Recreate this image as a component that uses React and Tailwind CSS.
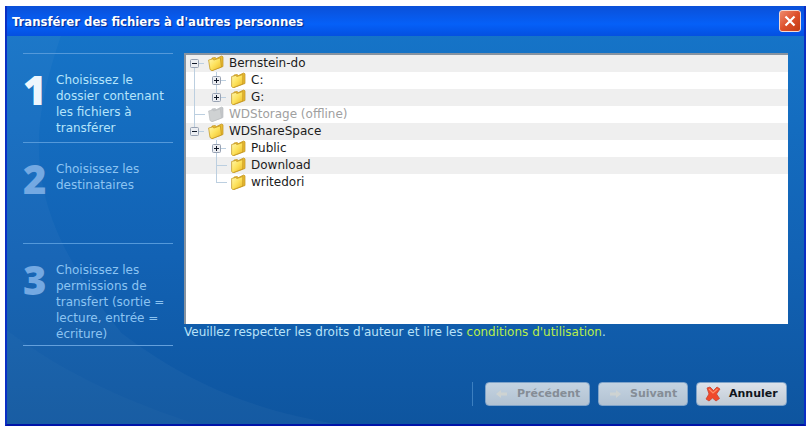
import React from "react";

const steps = [
  {
    number: "1",
    text: "Choisissez le dossier contenant les fichiers à transférer",
    size: "min-h-[89px]",
    numberColor: "text-[#eef6fd]",
    textColor: "text-[#b5e4fb]",
  },
  {
    number: "2",
    text: "Choisissez les destinataires",
    size: "min-h-[101px]",
    numberColor: "text-[#74a9e2]",
    textColor: "text-[#8cc4f2]",
  },
  {
    number: "3",
    text: "Choisissez les permissions de transfert (sortie = lecture, entrée = écriture)",
    size: "min-h-[102px]",
    numberColor: "text-[#74a9e2]",
    textColor: "text-[#8cc4f2]",
  },
];

const rows = [
  { label: "Bernstein-do", guides: [{ toggle: "minus", down: true }] },
  { label: "C:", guides: [{ up: true, down: true }, { toggle: "plus", up: true, down: true }] },
  { label: "G:", guides: [{ up: true, down: true }, { toggle: "plus", up: true }] },
  { label: "WDStorage (offline)", offline: true, guides: [{ up: true, down: true, across: true }] },
  { label: "WDShareSpace", guides: [{ toggle: "minus", up: true }] },
  { label: "Public", guides: [{}, { toggle: "plus", up: true, down: true }] },
  { label: "Download", guides: [{}, { up: true, down: true, across: true }] },
  { label: "writedori", guides: [{}, { up: true, across: true }] },
];

function Guide({ up, down, across, toggle, label }) {
  const drawing = (
    <svg width="22" height="17" viewBox="0 0 22 17" className="block" aria-hidden="true">
      <g stroke="#bccfe0" shapeRendering="crispEdges">
        {up && <path d="M8.5 0V9" />}
        {down && <path d="M8.5 8V17" />}
        {across && <path d="M8 8.5H19" />}
        {toggle && <path d="M13 8.5H18" />}
      </g>
      {toggle && (
        <>
          <rect x="4.500" y="4.500" width="8" height="8" rx="1" fill="#eceef2" stroke="#98a2b3" />
          <path d="M6 8.500H11" stroke="#101828" />
          {toggle === "plus" && <path d="M8.500 6V11" stroke="#101828" />}
        </>
      )}
    </svg>
  );
  if (!toggle) return drawing;
  return (
    <button type="button" aria-label={label} aria-expanded={toggle === "minus"}>
      {drawing}
    </button>
  );
}

function Folder({ offline, open }) {
  const edge = offline ? "#bcbfc2" : "#c0921c";
  const back = offline ? "#c4c7c9" : "#e9bb33";
  return (
    <svg width="16" height="17" viewBox="0 0 16 17" className="block shrink-0" aria-hidden="true">
      <defs>
        <linearGradient id="folderFront" x1="0" y1="0" x2="1" y2="1">
          <stop offset="0" stopColor="#fff8b0" />
          <stop offset="0.5" stopColor="#fde25c" />
          <stop offset="1" stopColor="#eab524" />
        </linearGradient>
      </defs>
      <path d="M4 3L7 2.500L8.500 3.500L13.500 1L15 1.800V11.500L4 15.500L2.500 14Z" fill={back} stroke={edge} strokeWidth="0.7" />
      <path
        d={open ? "M0.600 5L4.500 4L6 5L12.300 2.800L13.500 12L4 15.700L2 14.500Z" : "M1.600 4.500L5.500 3.500L7 4.500L12.800 2.500V12L3 15.700L1.600 14.500Z"}
        fill={offline ? "#cfd2d3" : "url(#folderFront)"}
        stroke={edge}
        strokeWidth="0.7"
      />
    </svg>
  );
}

function Arrow({ back }) {
  return (
    <svg width="14" height="12" viewBox="0 0 14 12" className="block" aria-hidden="true">
      <path
        d={back ? "M1 6L6 2V4.500H12V7.500H6V10Z" : "M13 6L8 2V4.500H2V7.500H8V10Z"}
        fill="#ced3d2"
      />
    </svg>
  );
}

function Cross() {
  return (
    <svg width="16" height="16" viewBox="0 0 16 16" className="block" aria-hidden="true">
      <path
        d="M2 2L5 1L8.500 4.500L12 1L15 3L11.500 8L14.500 12.500L11 15L7.500 12L4 15L1 13L4 8Z"
        fill="#f0492c"
        stroke="#c9432e"
        strokeWidth="0.8"
        strokeLinejoin="round"
      />
      <path d="M4 3L8 7L12.500 3" fill="none" stroke="#ff8d68" strokeWidth="1.200" />
    </svg>
  );
}

const buttonBase =
  "flex h-6 items-center gap-2 rounded border border-[#7fa3c9] font-bold text-[11px] leading-4";
const disabledButton = "bg-linear-to-b from-[#c4d3e1] to-[#b2c2d2] pl-[9px] text-[#858d96]";

export default function App() {
  return (
    <div className="bg-white pt-[6px] pr-[6px] pb-[2px] pl-[5px] font-['DejaVu_Sans',Verdana,sans-serif] text-[12px]">
      <main className="relative isolate flex flex-col overflow-hidden border-x-2 border-b-2 border-[#0a2fc4] border-b-[#0014a8] bg-linear-to-b from-[#1676ca] via-[#1262b4] via-60% to-[#0e559f]">
        <svg
          className="absolute inset-0 -z-10 h-full w-full"
          viewBox="0 0 798 419"
          preserveAspectRatio="none"
          aria-hidden="true"
        >
          <path d="M54 30C20 130 15 205 115 328C200 392 270 408 330 419H0V30Z" fill="#fff" fillOpacity="0.030" />
          <path d="M0 325C60 370 125 398 190 419H0Z" fill="#fff" fillOpacity="0.020" />
        </svg>

        <header className="-mx-[2px] flex h-[30px] items-center justify-between bg-linear-to-b from-[#0a50d8] via-[#0560f8] via-60% to-[#0450e0] pr-[5px] pl-[7px]">
          <h1 className="font-['DejaVu_Sans_Condensed','DejaVu_Sans',sans-serif] pt-[2px] text-[13px] leading-5 font-bold text-white [text-shadow:1px_1px_1px_#06288c]">
            Transférer des fichiers à d'autres personnes
          </h1>
          <button
            type="button"
            aria-label="Fermer"
            className="grid size-[22px] place-items-center rounded-[3px] border border-[#f3d9d3] bg-linear-to-br from-[#ee8a6c] via-[#dd4f2b] to-[#c23c14]"
          >
            <svg width="14" height="14" viewBox="0 0 14 14" aria-hidden="true">
              <path d="M2.500 2.500L11.500 11.500M11.500 2.500L2.500 11.500" stroke="#fff" strokeWidth="2.200" />
            </svg>
          </button>
        </header>

        <div className="flex gap-[11px] px-4 pt-[17px]">
          <ol className="w-[150px] shrink-0 border-b border-[#64a0dc]">
            {steps.map((step) => (
              <li
                key={step.number}
                className={`flex border-t border-[#5499da] pt-[18px] ${step.size}`}
              >
                <span className={`w-[33px] shrink-0 pt-[2px] font-['Open_Sans',sans-serif] text-[40px] leading-8 font-extrabold ${step.numberColor}`}>
                  {step.number}
                </span>
                <span className={`leading-4 ${step.textColor}`}>{step.text}</span>
              </li>
            ))}
          </ol>

          <section className="min-w-0 flex-1">
            <ul className="h-[271px] border-t-2 border-l-2 border-[#8793a0] bg-white">
              {rows.map((row) => (
                <li key={row.label} className="flex h-[17px] items-center odd:bg-[#efefef]">
                  {row.guides.map((guide, i) => (
                    <Guide key={i} {...guide} label={row.label} />
                  ))}
                  <Folder offline={row.offline} open={row.guides.length === 1} />
                  <span className={`pl-[5px] leading-[17px] ${row.offline ? "text-[#a0a0a0]" : "text-[#1c1c1c]"}`}>
                    {row.label}
                  </span>
                </li>
              ))}
            </ul>
            <p className="leading-4 text-[#b8e2f8]">
              Veuillez respecter les droits d'auteur et lire les{" "}
              <a href="#conditions" className="text-[#b9ee4a]">
                conditions d'utilisation
              </a>
              .
            </p>
          </section>
        </div>

        <footer className="flex items-center justify-end gap-2 pt-9 pr-[17px] pb-[18px]">
          <span className="mr-1 h-6 w-px bg-[#3c7fc0]" />
          <button type="button" disabled className={`${buttonBase} ${disabledButton} w-[105px]`}>
            <Arrow back />
            Précédent
          </button>
          <button type="button" disabled className={`${buttonBase} ${disabledButton} w-[90px]`}>
            <Arrow />
            Suivant
          </button>
          <button type="button" className={`${buttonBase} w-[91px] bg-linear-to-b from-[#dce2ea] to-[#c0cad5] pl-2 text-[#10151c]`}>
            <Cross />
            Annuler
          </button>
        </footer>
      </main>
    </div>
  );
}
